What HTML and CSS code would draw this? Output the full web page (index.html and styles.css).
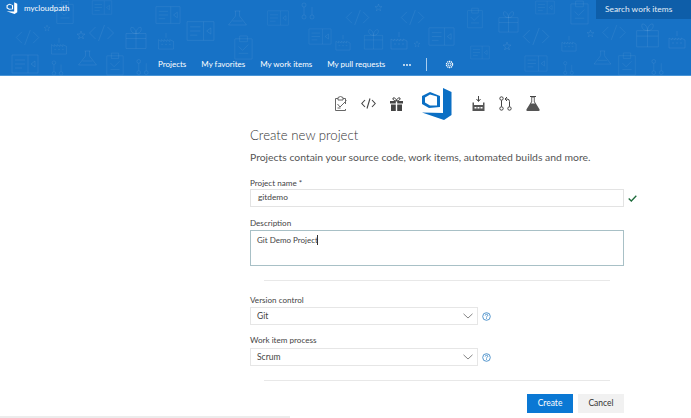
FILE: index.html
```html
<!DOCTYPE html>
<html lang="en">
<head>
<meta charset="utf-8">
<title>Create new project</title>
<link rel="stylesheet" href="styles.css">
</head>
<body>
<svg class="defs" width="0" height="0" aria-hidden="true">
  <defs>
    <symbol id="p-clip" viewBox="0 0 22 26"><path d="M2 4h18v21H2zM7 1h8v6H7zM6 12l4 4 6-6M6 19h10"/></symbol>
    <symbol id="p-code" viewBox="0 0 26 16"><path d="M7 2L1 8l6 6M19 2l6 6-6 6M16 0l-6 16"/></symbol>
    <symbol id="p-gift" viewBox="0 0 22 24"><path d="M1 8h20v15H1zM11 8v15M1 13h20M11 8C7 8 5 5 6 2c2-1 5 2 5 6 0-4 3-7 5-6 1 3-1 6-5 6z"/></symbol>
    <symbol id="p-factory" viewBox="0 0 18 18"><path d="M1 7l3 2V7l3 2V7l3 2V7l3 2V7l4 2v8H1zM9 0v5M4 12h2M8 12h2M12 12h2"/></symbol>
    <symbol id="p-flask" viewBox="0 0 24 16"><path d="M9 1h6M10 1v5L3 15h18l-7-9V1M7 11h10"/></symbol>
    <symbol id="p-board" viewBox="0 0 28 20"><path d="M1 1h26v18H1zM17 1v18M4 6h10M4 10h10M4 14h7M20 10l4-3v6z"/></symbol>
    <symbol id="p-star" viewBox="0 0 8 8"><path d="M4 0l1 3h3L5.500 5l1 3L4 6 1.500 8l1-3L0 3h3z"/></symbol>
    <symbol id="p-branch" viewBox="0 0 16 18"><path d="M4 5v8M12 5v8"/><circle cx="4" cy="3" r="2"/><circle cx="4" cy="15" r="2"/><circle cx="12" cy="15" r="2"/></symbol>
    <symbol id="devops-mark" viewBox="0 0 32 33">
      <path d="M22 1L30.500 5V28L23 33 1 25.500 22 26z"/>
      <path fill-rule="evenodd" d="M1 9L9 5 19 9V20L8 21 1 17zM4 10.500V15.500L9 18.500H16V9.500L9 7.500z"/>
    </symbol>
  </defs>
</svg>

<header class="banner">
  <svg class="pattern" width="691" height="76" viewBox="0 0 691 76" aria-hidden="true">
    <use href="#p-clip" x="55" y="0" width="20" height="25"/>
    <use href="#p-board" x="90" y="0" width="24" height="15"/>
    <use href="#p-board" x="155" y="5" width="26" height="20"/>
    <use href="#p-flask" x="225" y="10" width="25" height="16"/>
    <use href="#p-board" x="265" y="10" width="26" height="16"/>
    <use href="#p-branch" x="300" y="2" width="16" height="18"/>
    <use href="#p-code" x="15" y="30" width="25" height="15"/>
    <use href="#p-star" x="44" y="25" width="6" height="6"/>
    <use href="#p-factory" x="50" y="38" width="18" height="17"/>
    <use href="#p-star" x="77" y="31" width="8" height="8"/>
    <use href="#p-code" x="88" y="25" width="27" height="16"/>
    <use href="#p-gift" x="125" y="25" width="22" height="25"/>
    <use href="#p-factory" x="157" y="33" width="18" height="17"/>
    <use href="#p-board" x="186" y="17" width="29" height="28"/>
    <use href="#p-clip" x="232" y="35" width="23" height="25"/>
    <use href="#p-board" x="305" y="28" width="30" height="17"/>
    <use href="#p-factory" x="335" y="35" width="16" height="16"/>
    <use href="#p-board" x="10" y="54" width="30" height="20"/>
    <use href="#p-branch" x="50" y="60" width="15" height="16"/>
    <use href="#p-flask" x="75" y="50" width="25" height="16"/>
    <use href="#p-clip" x="105" y="52" width="20" height="24"/>
    <use href="#p-branch" x="135" y="58" width="15" height="18"/>
    <use href="#p-code" x="345" y="10" width="25" height="15"/>
    <use href="#p-star" x="375" y="4" width="7" height="7"/>
    <use href="#p-code" x="400" y="10" width="25" height="15"/>
    <use href="#p-gift" x="362" y="28" width="23" height="22"/>
    <use href="#p-factory" x="390" y="32" width="18" height="18"/>
    <use href="#p-star" x="414" y="41" width="6" height="6"/>
    <use href="#p-board" x="428" y="25" width="27" height="23"/>
    <use href="#p-clip" x="466" y="3" width="18" height="30"/>
    <use href="#p-gift" x="497" y="10" width="23" height="23"/>
    <use href="#p-board" x="535" y="0" width="20" height="15"/>
    <use href="#p-clip" x="569" y="0" width="21" height="25"/>
    <use href="#p-code" x="522" y="28" width="28" height="17"/>
    <use href="#p-factory" x="560" y="36" width="18" height="16"/>
    <use href="#p-star" x="587" y="30" width="7" height="7"/>
    <use href="#p-code" x="600" y="25" width="28" height="15"/>
    <use href="#p-gift" x="635" y="22" width="25" height="26"/>
    <use href="#p-factory" x="668" y="30" width="18" height="20"/>
    <use href="#p-board" x="470" y="45" width="20" height="15"/>
    <use href="#p-star" x="503" y="42" width="8" height="8"/>
    <use href="#p-board" x="522" y="55" width="28" height="17"/>
    <use href="#p-branch" x="562" y="60" width="13" height="16"/>
    <use href="#p-flask" x="590" y="50" width="25" height="15"/>
    <use href="#p-clip" x="615" y="52" width="24" height="24"/>
    <use href="#p-branch" x="650" y="58" width="15" height="18"/>
  </svg>
  <div class="topbar">
    <div class="brand">
      <svg class="brand-logo" width="12" height="12"><use href="#devops-mark" width="12" height="12"/></svg>
      <span>mycloudpath</span>
    </div>
    <div class="search">Search work items</div>
  </div>
  <nav class="nav">
    <a class="nav-item active">Projects</a>
    <a class="nav-item">My favorites</a>
    <a class="nav-item">My work items</a>
    <a class="nav-item">My pull requests</a>
    <svg class="more" width="8" height="2" viewBox="0 0 8 2"><circle cx="1" cy="1" r=".9"/><circle cx="4" cy="1" r=".9"/><circle cx="7" cy="1" r=".9"/></svg>
    <span class="nav-divider"></span>
    <svg class="gear" width="9" height="9" viewBox="0 0 10 10"><circle cx="5" cy="5" r="1.700" fill="none" stroke="#fff"/><circle cx="5" cy="5" r="3.500" fill="none" stroke="#fff" stroke-width="1.300" stroke-dasharray="1.500 .7"/></svg>
  </nav>
</header>

<main class="form">
  <div class="hub-icons">
    <svg class="hub" width="13" height="15" viewBox="0 0 13 15"><path d="M11.500 8V2.500H9M4 2.500H1.500v12h10V13M4 4V1.500l2.500-1 2.500 1V4zM3.500 8l2.500 3 6.500-6.500M3.500 12h3" fill="none" stroke="#666" stroke-width="1"/></svg>
    <svg class="hub" width="15" height="11" viewBox="0 0 15 11"><path d="M4 2L.8 5.500 4 9M11 2l3.200 3.500L11 9M9 .5l-3 10" fill="none" stroke="#444" stroke-width="1.100"/></svg>
    <svg class="hub" width="13" height="14" viewBox="0 0 13 14"><path d="M0 4h5.800v2.500H0zM7.200 4H13v2.500H7.200zM1 7.500h4.800V14H1zM7.200 7.500H12V14H7.200z" fill="#444"/><path d="M6.500 4C4 4 2.500 2.500 3 1c1.500-.8 3.500 1 3.500 3 0-2 2-3.800 3.500-3 .5 1.500-1 3-3.500 3z" fill="none" stroke="#444"/></svg>
    <svg class="hub-logo" width="32" height="33"><use href="#devops-mark" width="32" height="33"/></svg>
    <svg class="hub" width="13" height="15" viewBox="0 0 13 15"><path d="M6.500 0v5M4.500 3l2 2.500 2-2.500" fill="none" stroke="#444"/><path d="M.500 6.500h1.500V9H11V6.500h1.500V15H.500z" fill="#555"/><path d="M2.500 11h2v1.500h-2zM5.500 11h2v1.500h-2zM8.500 11h2v1.500h-2z" fill="#fff"/></svg>
    <svg class="hub" width="13" height="15" viewBox="0 0 13 15"><g fill="none" stroke="#444"><circle cx="2.500" cy="2.500" r="1.700"/><circle cx="2.500" cy="12.500" r="1.700"/><circle cx="10.500" cy="12.500" r="1.700"/><path d="M2.500 4.300v6.400M10.500 10.700V5.500Q10.500 3 8 3H6M8 1L6 3l2 2"/></g></svg>
    <svg class="hub" width="14" height="15" viewBox="0 0 14 15"><path d="M4 .500h6" stroke="#444" fill="none"/><path d="M5.300 1H8.700V5.500L13.600 13.500Q14 15 12.500 15H1.500Q0 15 .400 13.500L5.300 5.500z" fill="#555"/><path d="M6.200 1.500H7.800V5.800L9 7.500H5L6.200 5.800z" fill="#fff"/></svg>
  </div>

  <h1 class="title">Create new project</h1>
  <p class="lead">Projects contain your source code, work items, automated builds and more.</p>

  <label class="label label-name">Project name *</label>
  <div class="field-row">
    <div class="input">gitdemo</div>
    <svg class="check" width="9" height="7" viewBox="0 0 9 7"><path d="M.700 3.500L3.300 6 8.300.800" fill="none" stroke="#1e6b3c" stroke-width="1.300"/></svg>
  </div>

  <label class="label label-desc">Description</label>
  <div class="textarea">Git Demo Project<span class="caret"></span></div>

  <hr class="rule rule-a">

  <label class="label label-vc">Version control</label>
  <div class="field-row">
    <div class="select">
      <span>Git</span>
      <svg width="10" height="6" viewBox="0 0 10 6"><path d="M.500.800L5 5 9.500.800" fill="none" stroke="#666" stroke-width=".8"/></svg>
    </div>
    <svg class="help" width="9" height="9" viewBox="0 0 9 9"><circle cx="4.500" cy="4.500" r="3.800" fill="none" stroke="#2f7fc1" stroke-width=".8"/><path d="M3.200 3.500Q3.300 2.300 4.500 2.300T5.800 3.400Q5.800 4.100 4.500 4.800V5.500M4.500 6.200V7" fill="none" stroke="#2f7fc1" stroke-width=".8"/></svg>
  </div>

  <label class="label label-wip">Work item process</label>
  <div class="field-row">
    <div class="select">
      <span>Scrum</span>
      <svg width="10" height="6" viewBox="0 0 10 6"><path d="M.500.800L5 5 9.500.800" fill="none" stroke="#666" stroke-width=".8"/></svg>
    </div>
    <svg class="help" width="9" height="9" viewBox="0 0 9 9"><circle cx="4.500" cy="4.500" r="3.800" fill="none" stroke="#2f7fc1" stroke-width=".8"/><path d="M3.200 3.500Q3.300 2.300 4.500 2.300T5.800 3.400Q5.800 4.100 4.500 4.800V5.500M4.500 6.200V7" fill="none" stroke="#2f7fc1" stroke-width=".8"/></svg>
  </div>

  <hr class="rule rule-b">

  <div class="actions">
    <button class="btn btn-primary" type="button">Create</button>
    <button class="btn btn-default" type="button">Cancel</button>
  </div>
</main>

<div class="page-scroll"></div>
</body>
</html>
```

FILE: styles.css
```css
* { box-sizing: border-box; }

html, body {
  margin: 0;
  height: 418px;
  overflow: hidden;
  background: #fff;
  color: #444;
  font-family: Lato, "Open Sans", sans-serif;
}

.defs { display: block; height: 0; }

.banner {
  position: relative;
  height: 76px;
  background: #1772c6;
  border-bottom: 1px solid #4a95d6;
  color: #fff;
}

.pattern {
  position: absolute;
  left: 0;
  top: 0;
  fill: none;
  stroke: rgba(255, 255, 255, 0.09);
  stroke-width: 0.8;
}

.topbar {
  position: relative;
  display: flex;
  justify-content: space-between;
  height: 19px;
}

.brand {
  display: flex;
  align-items: center;
  gap: 6px;
  padding: 0 0 3px 6px;
  font-size: 8px;
  line-height: 16px;
}

.brand-logo { fill: #fff; }

.search {
  width: 95px;
  background: #0e5ea9;
  padding-left: 9px;
  font-size: 8.4px;
  line-height: 18px;
  white-space: nowrap;
  color: #e3eef8;
}

.nav {
  position: relative;
  display: flex;
  align-items: center;
  height: 13px;
  margin-top: 39px;
  padding-left: 158px;
  font-size: 8px;
  line-height: 13px;
}

.nav-item {
  position: relative;
  margin-right: 15px;
  color: #fff;
}

.active::after {
  content: "";
  position: absolute;
  left: 50%;
  top: 18px;
  margin-left: -4px;
  border: 4px solid transparent;
  border-top: 0;
  border-bottom-color: #fff;
}

.more { fill: #fff; flex: none; margin-left: 3px; }

.nav-divider {
  width: 1px;
  height: 13px;
  margin-left: 15px;
  background: #a9cdee;
}

.gear { margin-left: 18px; }

.form {
  width: 374px;
  margin-left: 250px;
}

.hub-icons {
  display: flex;
  align-items: center;
  justify-content: center;
  gap: 14px;
  height: 33px;
  margin-top: 11px;
}

.hub { flex: none; }

.hub-logo {
  flex: none;
  margin: 0 5px 0 4px;
  fill: #0b6fc4;
}

.title {
  margin: 5px 0 0;
  font-size: 13.2px;
  line-height: 20px;
  font-weight: 300;
  color: #333;
}

.lead {
  margin: 4px 0 0;
  font-size: 10.4px;
  line-height: 16px;
  color: #555;
  white-space: nowrap;
}

.label {
  display: block;
  font-size: 8.1px;
  line-height: 12px;
}

.label-name { margin: 12px 0 0; }
.label-desc { margin: 10px 0 1px; }
.label-vc { margin: 13px 0 1px; }
.label-wip { margin: 9px 0 2px; }

.field-row {
  display: flex;
  align-items: center;
}

.input {
  flex: none;
  width: 374px;
  height: 18px;
  padding-left: 7px;
  border: 1px solid #e3e3e3;
  font-size: 8.3px;
  line-height: 15px;
}

.check { flex: none; margin-left: 4px; }

.textarea {
  height: 36px;
  padding: 3px 0 0 6px;
  border: 1px solid #a8c0c6;
  border-top-width: 1.5px;
  font-size: 8px;
  line-height: 12px;
}

.caret {
  display: inline-block;
  width: 1px;
  height: 10px;
  margin-left: -1px;
  vertical-align: -2px;
  background: #333;
}

.rule {
  height: 1px;
  margin: 0 14px;
  border: 0;
  background: #e8e8e8;
}

.rule-a { margin-top: 14px; }
.rule-b { margin-top: 14px; }

.select {
  flex: none;
  display: flex;
  align-items: center;
  justify-content: space-between;
  width: 228px;
  height: 18px;
  padding: 0 4px 0 6px;
  border: 1px solid #e6e6e6;
  font-size: 8.5px;
}

.help { flex: none; margin-left: 4px; }

.actions {
  display: flex;
  justify-content: flex-end;
  gap: 5px;
  margin-top: 13px;
}

.btn {
  width: 46px;
  height: 19px;
  padding: 0;
  border: 0;
  font: inherit;
  font-size: 8.5px;
  line-height: 19px;
}

.btn-primary { background: #0a78d4; color: #fff; }
.btn-default { background: #f1f1f1; color: #333; }

.page-scroll {
  width: 290px;
  height: 2px;
  margin-top: 3px;
  background: #ececec;
}
```
